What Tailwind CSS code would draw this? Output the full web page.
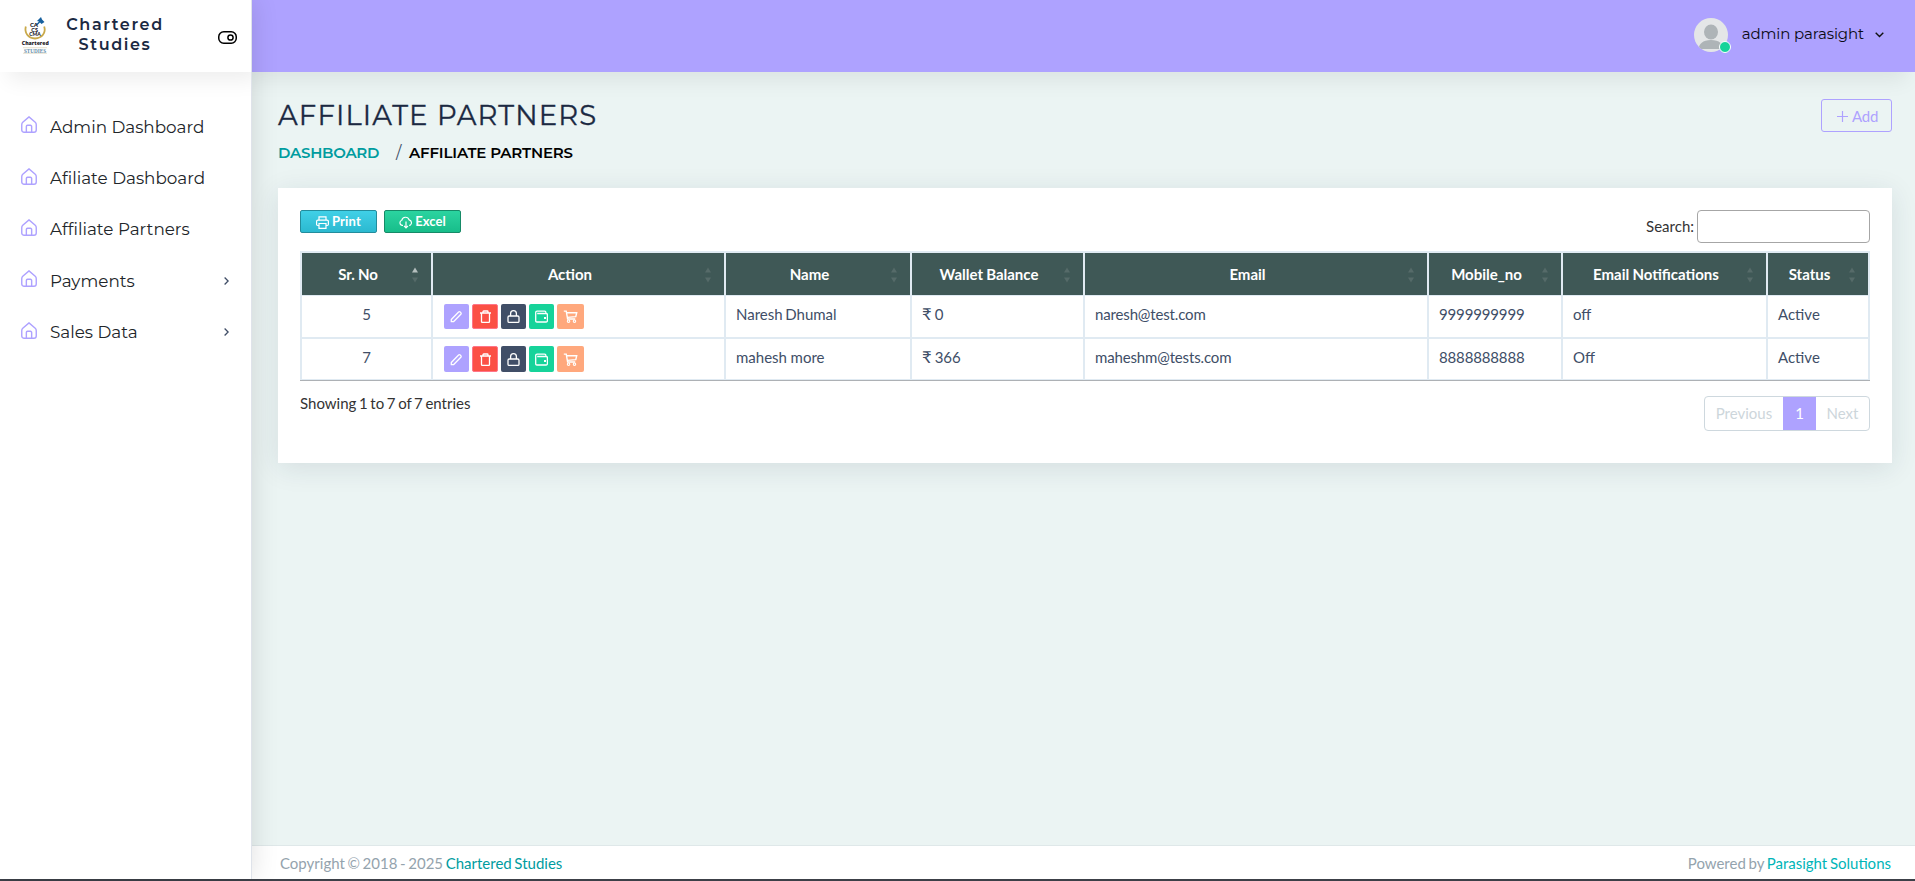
<!DOCTYPE html>
<html lang="en">
<head>
<meta charset="utf-8">
<title>Affiliate Partners</title>
<script src="https://cdn.jsdelivr.net/npm/@tailwindcss/browser@4"></script>
</head>
<body class="h-[881px] overflow-hidden bg-[#ebf4f3] font-['Lato',sans-serif] text-[15px] leading-6 text-[#404e67] [word-spacing:-1.2px]">
<svg class="hidden">
  <symbol id="home" viewBox="1.8 1.1 20.4 21.8"><path d="M4 9.2 12 2.2l8 7c1 .9 1.3 1.6 1.3 3V19a3 3 0 0 1-3 3H5.700a3 3 0 0 1-3-3v-6.800c0-1.400.3-2.100 1.300-3zM8.600 22v-7.500a1.500 1.500 0 0 1 1.500-1.500h3.800a1.500 1.500 0 0 1 1.500 1.500V22" fill="none" stroke="currentColor" stroke-width="1.800"/></symbol>
  <symbol id="sort" viewBox="0 0 6 16"><path d="M0 5.500 3 .5l3 5z"/><path d="M0 10.500 3 15.500l3-5z"/></symbol>
  <symbol id="pencil" viewBox="0 0 13 13"><path d="M1.300 11.700v-2.200L8.600 2q.8-.8 1.600 0l.6.6q.8.800 0 1.600l-7.300 7.500z" fill="none" stroke="currentColor" stroke-width="1.300" stroke-linejoin="round"/></symbol>
  <symbol id="trash" viewBox="0 0 13 13"><path d="M1 3h11M4 3V1.700q0-.7.700-.7h3.600q.7 0 .7.700V3M2.500 3v8.600q0 .8.800.8h6.400q.8 0 .8-.8V3" fill="none" stroke="currentColor" stroke-width="1.300"/></symbol>
  <symbol id="lock" viewBox="0 0 13 13"><rect x="1" y="6" width="11" height="6.400" rx="1.200" fill="none" stroke="currentColor" stroke-width="1.300"/><path d="M3.600 6V3.600a2.900 2.900 0 0 1 5.800 0V6" fill="none" stroke="currentColor" stroke-width="1.300"/></symbol>
  <symbol id="wallet" viewBox="0 0 13 13"><path d="M2.200 3.500h9q1.200 0 1.200 1.200v6.100q0 1.200-1.200 1.200H1.900Q.7 12 .7 10.800V2.500Q.7 1.100 2.100 1.100h7.500q1.300 0 1.300 1.300v1.100H2.200" fill="none" stroke="currentColor" stroke-width="1.300"/><rect x="9" y="7" width="2" height="2" fill="currentColor"/></symbol>
  <symbol id="cart" viewBox="0 0 15 14"><path d="M.3 1.200h2.600l1.500 8.500h8.200M3.200 2.900h11l-1 4.300-9.200.8" fill="none" stroke="currentColor" stroke-width="1.500"/><circle cx="5.400" cy="12" r="1.300" fill="none" stroke="currentColor" stroke-width="1.200"/><circle cx="11.800" cy="12" r="1.300" fill="none" stroke="currentColor" stroke-width="1.200"/></symbol>
</svg>
<div class="flex h-[879px]">
  <aside class="relative z-40 flex w-[252px] shrink-0 flex-col border-r border-[#dfe3ea] bg-white shadow-[1px_0_25px_rgba(0,0,0,0.12)]">
    <div class="flex h-[72px] w-[251px] shrink-0 items-start pl-[20px] font-['Montserrat','Inter',sans-serif] shadow-[8px_8px_20px_rgba(0,0,0,0.07)] [clip-path:inset(0_0_-40px_0)]">
      <svg class="mt-[16px] h-[38px] w-[30px] shrink-0 overflow-visible" viewBox="0 0 30 38">
        <path d="M5.800 10.500C4.300 17 8 22 15 22.500 22 22 26.200 17 24.200 10.500" fill="none" stroke="#c9a94a" stroke-width="1.800"/>
        <path d="m17 5 4-4 1 2.500 2.500 2.500-3 2-1.500-1.500-3 3-1-1 3-3z" fill="#17609e"/>
        <g fill="#1c2026" font-family="Lato" font-weight="900" text-anchor="middle"><text x="14" y="10.600" font-size="6">CA</text><text x="14.700" y="15.500" font-size="5.500">CS</text><text x="15" y="19.800" font-size="5">CMA</text><text x="15.300" y="29.200" font-size="5.500" font-family="Open Sans" font-weight="800" textLength="27" lengthAdjust="spacingAndGlyphs">Chartered</text></g>
        <path d="M3 31.700h24M3 37.300h24" stroke="#d9cfae" stroke-width=".6"/>
        <text x="15" y="36.600" font-size="5.500" font-weight="700" font-family="Liberation Serif" fill="#5f8cab" text-anchor="middle" textLength="22" lengthAdjust="spacingAndGlyphs">STUDIES</text>
      </svg>
      <div class="ml-[15px] mt-[15px] w-[100px] text-center text-[16px] font-semibold leading-[20px] tracking-[1.600px] text-[#1b2942]">Chartered Studies</div>
      <svg class="ml-[53px] mt-[31px] h-[13px] w-[19px]" viewBox="0 0 19 13" fill="none" stroke="#000" stroke-width="1.500"><rect x=".75" y=".75" width="17.500" height="11.500" rx="5"/><circle cx="12.500" cy="6.500" r="2.600"/></svg>
    </div>
    <nav class="mt-[29px] flex flex-col font-['Montserrat','Inter',sans-serif] text-[16.800px] text-[#212529] [word-spacing:0] [&_span]:ml-[13px]">
      <a class="flex h-[51.400px] items-center pl-[21px]"><svg class="mb-[4px] h-[17px] w-[16px] text-[#aea2ff]"><use href="#home"/></svg><span>Admin Dashboard</span></a>
      <a class="flex h-[51.400px] items-center pl-[21px]"><svg class="mb-[4px] h-[17px] w-[16px] text-[#aea2ff]"><use href="#home"/></svg><span>Afiliate Dashboard</span></a>
      <a class="flex h-[51.400px] items-center pl-[21px]"><svg class="mb-[4px] h-[17px] w-[16px] text-[#aea2ff]"><use href="#home"/></svg><span>Affiliate Partners</span></a>
      <a class="flex h-[51.400px] items-center pl-[21px]"><svg class="mb-[4px] h-[17px] w-[16px] text-[#aea2ff]"><use href="#home"/></svg><span>Payments</span><svg class="ml-auto mr-[22px] h-[8px] w-[5px]" viewBox="0 0 5 8" fill="none" stroke="#404e67" stroke-width="1.300"><path d="m.6.5 3.500 3.500L.6 7.500"/></svg></a>
      <a class="flex h-[51.400px] items-center pl-[21px]"><svg class="mb-[4px] h-[17px] w-[16px] text-[#aea2ff]"><use href="#home"/></svg><span>Sales Data</span><svg class="ml-auto mr-[22px] h-[8px] w-[5px]" viewBox="0 0 5 8" fill="none" stroke="#404e67" stroke-width="1.300"><path d="m.6.5 3.500 3.500L.6 7.500"/></svg></a>
    </nav>
  </aside>
  <div class="flex min-w-0 grow flex-col">
    <header class="relative z-30 flex h-[72px] shrink-0 items-center justify-end bg-[#aea2ff] pr-[31px] shadow-[-8px_8px_20px_rgba(0,0,0,0.07)]">
      <span class="relative mb-[2px] h-[34px] w-[34px]">
        <svg class="h-[34px] w-[34px] rounded-full" viewBox="0 0 34 34"><rect width="34" height="34" fill="#e4e6e7"/><ellipse cx="17" cy="14" rx="7" ry="7.500" fill="#aeb4b7"/><path d="M4.500 31c.5-5 4-9 12.500-9s12 4 12.500 9z" fill="#aeb4b7"/></svg>
        <i class="absolute -bottom-px left-[25px] h-[12px] w-[12px] rounded-full border border-white bg-[#16d39a]"></i>
      </span>
      <span class="mb-[4px] ml-[14px] font-['Montserrat','Inter',sans-serif] tracking-[-0.120px] text-[#0b0b14] [word-spacing:0]">admin parasight</span>
      <svg class="ml-[11px] mb-[2px] h-[6px] w-[9px]" viewBox="0 0 9 6" fill="none" stroke="#111" stroke-width="1.400"><path d="m.7.8 3.800 3.800L8.300.8"/></svg>
    </header>
    <main class="grow pl-[26px] pr-[23px] pt-[27px]">
      <div class="flex h-[89px] items-start justify-between">
        <div class="font-['Montserrat','Inter',sans-serif] [word-spacing:0]">
          <h1 class="text-[27.500px] leading-[32px] tracking-[1.150px] text-[#1b2942] [-webkit-text-stroke:0.3px_#1b2942]">AFFILIATE PARTNERS</h1>
          <div class="mt-[10px] flex h-[24px] text-[15px] leading-[24px]"><span class="w-[118px] font-semibold tracking-[-0.260px] text-[#009c9f]">DASHBOARD</span><span class="w-[13px] text-[16px]">/</span><span class="font-semibold tracking-[-0.160px] text-black">AFFILIATE PARTNERS</span></div>
        </div>
        <button class="flex h-[33px] w-[71px] items-center rounded-[3px] border border-[#aea2ff] pl-[15px] pt-px text-[#aea2ff]"><svg class="mr-[4px] h-[11px] w-[11px]" viewBox="0 0 11 11" stroke="currentColor" stroke-width="1.200"><path d="M5.500 0v11M0 5.500h11"/></svg><span class="tracking-[-0.200px]">Add</span></button>
      </div>
      <section class="h-[275px] w-[1614px] bg-white px-[22px] pt-[22px] shadow-[0_5px_26px_rgba(25,42,70,0.11)]">
        <div class="flex h-[41px] items-start">
          <button class="flex h-[23px] w-[77px] items-center justify-center gap-[3px] rounded-[2px] border border-[#238c9c] bg-linear-to-b from-[#40d0e7] to-[#2bb9d0] text-[13px] font-bold leading-[21px] tracking-[0.200px] text-white"><svg class="mt-px h-[13px] w-[13px]" viewBox="0 0 13 13" fill="none" stroke="currentColor" stroke-width="1.200"><path d="M3 4V.8h7V4M3 9.500H1.800Q.6 9.500.6 8.300V5.500Q.6 4.200 1.900 4.200h9.200q1.300 0 1.300 1.300v2.800q0 1.200-1.200 1.200H10M3 7.500h7v4.900H3z"/></svg>Print</button>
          <button class="ml-[7px] flex h-[23px] w-[77px] items-center justify-center gap-[2px] rounded-[2px] border border-[#168a67] bg-linear-to-b from-[#2bd4a0] to-[#17bd8a] text-[13px] font-bold leading-[21px] text-white"><svg class="mt-px h-[13px] w-[14px]" viewBox="0 0 14 13" fill="none" stroke="currentColor" stroke-width="1.200"><path d="M4 9.400H3A2.700 2.700 0 0 1 2.800 4.200a3.800 3.800 0 0 1 7.300-.4 3 3 0 0 1 .8 5.600h-.7M7 5.500v6.300M5 9.800l2 2 2-2"/></svg>Excel</button>
          <label class="ml-auto flex items-center gap-[3px] text-[#333]"><span class="mb-[2px]">Search:</span><input class="h-[33px] w-[173px] rounded-[4px] border border-[#a6a6a6] bg-white"></label>
        </div>
        <table class="w-[1570px] table-fixed border-separate border-spacing-0 border-b border-[#adb1b5] [&_td]:border-b-2 [&_td]:border-l-2 [&_td]:border-[#e0eaf2] [&_td]:px-[10px] [&_td]:pt-[6px] [&_td]:align-top [&_td:last-child]:border-r-2 [&_th]:border-l-2 [&_th]:border-t-2 [&_th]:border-b [&_th]:border-[#e0eaf2] [&_th]:p-0 [&_th:last-child]:border-r-2">
          <colgroup><col class="w-[131px]"><col class="w-[293px]"><col class="w-[186px]"><col class="w-[173px]"><col class="w-[344px]"><col class="w-[134px]"><col class="w-[205px]"><col class="w-[104px]"></colgroup>
          <thead>
            <tr class="h-[45px] bg-[#3f5856] font-bold text-white [word-spacing:-0.5px] [&_svg]:absolute [&_svg]:right-[13px] [&_svg]:top-[14px] [&_svg]:h-[16px] [&_svg]:w-[6px] [&_svg]:fill-[#566b69] [&_th]:relative [&_th]:pr-[17px]">
              <th>Sr. No<svg viewBox="0 0 6 16"><path class="fill-[#b5bfbe]" d="M0 5.500 3 .5l3 5z"/><path d="M0 10.500 3 15.500l3-5z"/></svg></th>
              <th>Action<svg><use href="#sort"/></svg></th>
              <th>Name<svg><use href="#sort"/></svg></th>
              <th>Wallet Balance<svg><use href="#sort"/></svg></th>
              <th>Email<svg><use href="#sort"/></svg></th>
              <th>Mobile_no<svg><use href="#sort"/></svg></th>
              <th>Email Notifications<svg><use href="#sort"/></svg></th>
              <th>Status<svg><use href="#sort"/></svg></th>
            </tr>
          </thead>
          <tbody>
            <tr class="h-[43px]">
              <td class="text-center">5</td>
              <td><div class="ml-px mt-[2px] flex gap-[3px] text-white [&_svg]:h-[13px] [&_svg]:w-[13px] [&>span]:flex [&>span]:h-[25px] [&>span]:items-center [&>span]:justify-center [&>span]:rounded-[2px]"><span class="w-[25px] bg-[#aea2ff]"><svg><use href="#pencil"/></svg></span><span class="w-[26px] border border-[#ff7588] bg-[#fb5045]"><svg><use href="#trash"/></svg></span><span class="w-[25px] bg-[#404e67]"><svg><use href="#lock"/></svg></span><span class="w-[25px] bg-[#16d39a]"><svg><use href="#wallet"/></svg></span><span class="w-[27px] bg-[#ffa87d]"><svg class="w-[15px]!"><use href="#cart"/></svg></span></div></td>
              <td>Naresh Dhumal</td><td><span class="inline-block w-[10px] text-[16.500px]">₹</span> 0</td><td class="tracking-[-0.150px]">naresh@test.com</td><td class="tracking-[-0.150px]">9999999999</td><td>off</td><td>Active</td>
            </tr>
            <tr class="h-[41px] [&>td]:border-b!">
              <td class="text-center">7</td>
              <td><div class="ml-px mt-px flex gap-[3px] text-white [&_svg]:h-[13px] [&_svg]:w-[13px] [&>span]:flex [&>span]:h-[26px] [&>span]:items-center [&>span]:justify-center [&>span]:rounded-[2px]"><span class="w-[25px] bg-[#aea2ff]"><svg><use href="#pencil"/></svg></span><span class="w-[26px] border border-[#ff7588] bg-[#fb5045]"><svg><use href="#trash"/></svg></span><span class="w-[25px] bg-[#404e67]"><svg><use href="#lock"/></svg></span><span class="w-[25px] bg-[#16d39a]"><svg><use href="#wallet"/></svg></span><span class="w-[27px] bg-[#ffa87d]"><svg class="w-[15px]!"><use href="#cart"/></svg></span></div></td>
              <td class="[word-spacing:-0.2px]">mahesh more</td><td><span class="inline-block w-[10px] text-[16.500px]">₹</span> 366</td><td class="tracking-[-0.150px]">maheshm@tests.com</td><td class="tracking-[-0.150px]">8888888888</td><td>Off</td><td>Active</td>
            </tr>
          </tbody>
        </table>
        <div class="flex justify-between">
          <div class="pt-[10px] text-[#333]">Showing 1 to 7 of 7 entries</div>
          <div class="mt-[15px] flex h-[35px] w-[166px] overflow-hidden rounded-[4px] border border-[#ced8de] text-center leading-[33px] text-[#cdd6db]"><span class="w-[78px]">Previous</span><span class="-my-px h-[35px] w-[33px] bg-[#aea2ff] pt-px text-white">1</span><span class="grow">Next</span></div>
        </div>
      </section>
    </main>
    <footer class="flex h-[34px] shrink-0 items-center justify-between border-t border-[#dfe8e9] bg-white pl-[28px] pr-[24px] text-[#94a3ad]"><span>Copyright © 2018 - 2025 <a class="text-[#009c9f]">Chartered Studies</a></span><span>Powered by <a class="text-[#00b5b8]">Parasight Solutions</a></span></footer>
  </div>
</div>
<div class="h-[2px] bg-[#3c4048]"></div>
</body>
</html>
